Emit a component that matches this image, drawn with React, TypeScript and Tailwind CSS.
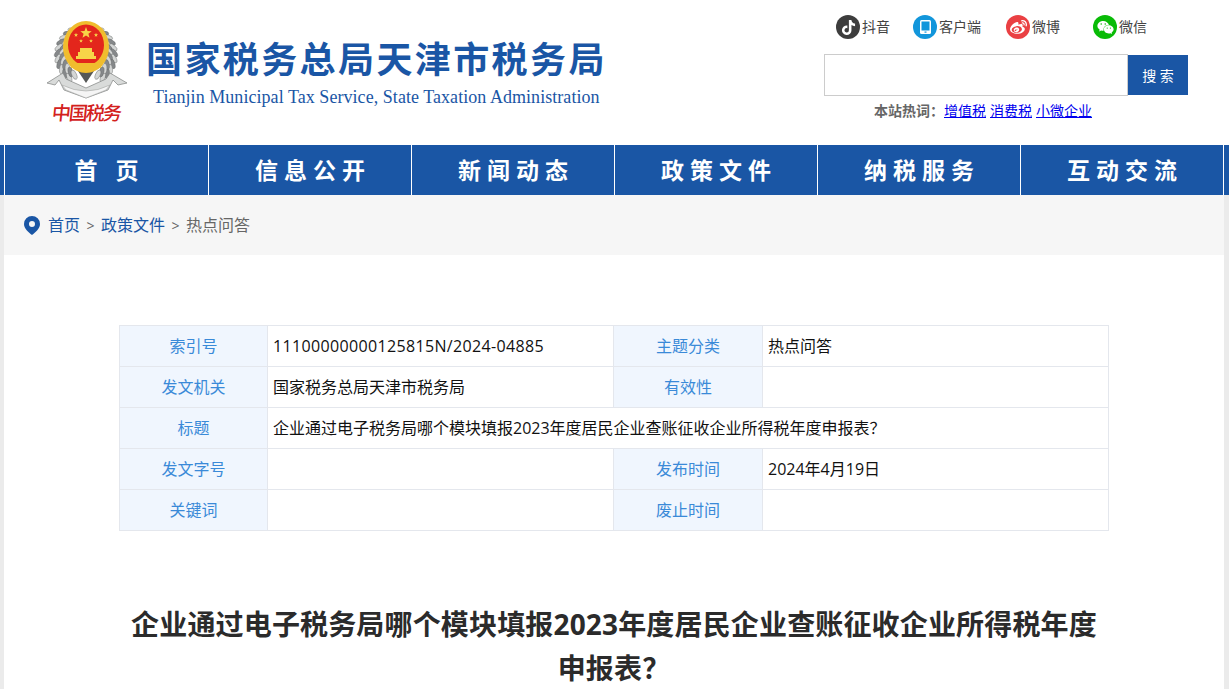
import React from "react";
import { FaTiktok, FaWeibo, FaWeixin } from "react-icons/fa";

const cjk = "font-['Open_Sans','Noto_Sans_CJK_SC',sans-serif]";

function Star({ x, y, r }: { x: number; y: number; r: number }) {
  const pts = Array.from({ length: 10 }, (_, i) => {
    const a = -Math.PI / 2 + (i * Math.PI) / 5;
    const d = i % 2 === 0 ? r : r * 0.42;
    return `${x + d * Math.cos(a)},${y + d * Math.sin(a)}`;
  }).join(" ");
  return <polygon points={pts} fill="#f7d448" />;
}

function Emblem() {
  const leaves = Array.from({ length: 11 }, (_, i) => i);
  const layer = (r: number, shift: number) =>
    leaves.map((i) => {
      const deg = -62 + i * 11.5 + shift;
      const a = (deg * Math.PI) / 180;
      const dx = r * Math.cos(a);
      const y = 55 + r * Math.sin(a);
      const fill = i % 2 ? "#85888a" : "#d4d6d5";
      return (
        <g key={`${r}-${i}`}>
          <ellipse cx={86 - dx} cy={y} rx="5" ry="2.3" fill={fill} stroke="#5f6261" strokeWidth="0.4" transform={`rotate(${-deg + 90 + 35} ${86 - dx} ${y})`} />
          <ellipse cx={86 + dx} cy={y} rx="5" ry="2.3" fill={fill} stroke="#5f6261" strokeWidth="0.4" transform={`rotate(${deg - 90 - 35} ${86 + dx} ${y})`} />
        </g>
      );
    });
  return (
    <svg width="85" height="84" viewBox="45 18 85 84" className="block blur-[0.3px]">
      {layer(28, 0)}
      {layer(23, 6)}
      <path d="M47 83 L63 73 L66 79 L86 88 L106 79 L110 73 L127 83 L118 85 L113 80 L108 90 L86 98 L64 90 L59 80 L55 85 Z" fill="#d9dbda" stroke="#7e8180" strokeWidth="0.7" />
      <path d="M62 85 Q86 97 110 85 L106 90 L86 98 L66 90 Z" fill="#f5f5f5" stroke="#9a9c9b" strokeWidth="0.5" />
      <path d="M78 71 L86 83 L94 71 Z" fill="#555857" />
      <ellipse cx="86" cy="47" rx="23" ry="26" fill="#f0bd2e" />
      <ellipse cx="86" cy="45" rx="18" ry="20.500" fill="#e3261c" />
      <Star x={86} y={33} r={6} />
      <Star x={76} y={35} r={2.2} />
      <Star x={96} y={35} r={2.2} />
      <Star x={81} y={41} r={2} />
      <Star x={91} y={41} r={2} />
      <path d="M76 56 H96 V59 H76 Z M78 52 H94 V56 H78 Z M80 48 H92 V52 H80 Z" fill="#f7d448" />
      <path d="M69 60 L76 63 H96 L103 60 L101 68 L94 66 L86 70 L78 66 L71 68 Z" fill="#f0bd2e" />
    </svg>
  );
}

function TopLink({ bg, icon, label, cls }: { bg: string; icon: React.ReactNode; label: string; cls: string }) {
  return (
    <div className={`flex items-center ${cls}`}>
      <span className={`flex h-6 w-6 items-center justify-center rounded-full text-white ${bg}`}>{icon}</span>
      <span className="ml-[2px] text-[14px] leading-6 text-[#444]">{label}</span>
    </div>
  );
}

const navItems = ["首 页", "信息公开", "新闻动态", "政策文件", "纳税服务", "互动交流"];

const Label = ({ children }: { children: React.ReactNode }) => (
  <td className="border border-[#e4e7ed] bg-[#f0f6fe] text-center text-[#3a8ad8]">{children}</td>
);
const Val = ({ children, span }: { children?: React.ReactNode; span?: number }) => (
  <td colSpan={span} className="border border-[#e4e7ed] px-[5px] text-[#111]">{children}</td>
);

export default function App() {
  return (
    <div className={`h-screen overflow-hidden bg-[#ebebeb] ${cjk}`}>
      <header className="flex h-[145px] bg-white">
        <div className="ml-[45px] mt-[18px] flex w-[85px] flex-col items-center">
          <Emblem />
          <div className="mt-[-3px] ml-[-2px] -skew-x-6 text-[19px] font-medium leading-[28px] tracking-[-2px] text-[#d3211c]">中国税务</div>
        </div>
        <div className="ml-[16px] mt-[35px] flex w-[461px] flex-col">
          <h1 className="whitespace-nowrap text-[36px] font-bold leading-[50px] tracking-[2.4px] text-[#1a56a5]">国家税务总局天津市税务局</h1>
          <p className="ml-[7px] whitespace-nowrap font-['Liberation_Serif',serif] text-[18px] leading-6 tracking-[0.05px] text-[#1a56a5]">Tianjin Municipal Tax Service, State Taxation Administration</p>
        </div>
        <div className="ml-[217px] flex w-[364px] flex-col">
          <div className="ml-[12px] mt-[15px] flex h-6">
            <TopLink bg="bg-[#3d3d3d]" icon={<FaTiktok size={15} />} label="抖音" cls="w-[77px]" />
            <TopLink
              bg="bg-[#1296db]"
              icon={
                <svg width="11" height="14" viewBox="0 0 11 14">
                  <rect x="0" y="0" width="11" height="14" rx="1.500" fill="#fff" />
                  <rect x="1.500" y="1.500" width="8" height="9" fill="#1296db" />
                  <rect x="4.500" y="11.500" width="2" height="1.200" fill="#1296db" />
                </svg>
              }
              label="客户端"
              cls="w-[93px]"
            />
            <TopLink bg="bg-[#ea4043]" icon={<FaWeibo size={17} />} label="微博" cls="w-[87px]" />
            <TopLink bg="bg-[#09bb07]" icon={<FaWeixin size={17} />} label="微信" cls="w-[80px]" />
          </div>
          <div className="mt-[15px] flex h-[42px] items-center">
            <input aria-label="搜索" className="h-[42px] w-[304px] border border-[#ccc] bg-white outline-none" />
            <button className="h-10 w-[60px] bg-[#1a56a5] text-[14px] text-white">搜 索</button>
          </div>
          <div className="ml-[50px] mt-[5px] whitespace-nowrap text-[14px] leading-[20px]">
            <span className="font-bold text-[#666]">本站热词：</span>
            <a href="#" className="text-[#0000ee] underline">增值税</a>
            <a href="#" className="ml-[4px] text-[#0000ee] underline">消费税</a>
            <a href="#" className="ml-[4px] text-[#0000ee] underline">小微企业</a>
          </div>
        </div>
      </header>

      <nav className="flex h-[50px] bg-[#1a56a5] pl-[4px]">
        <div className="flex border-l border-white">
          {navItems.map((n) => (
            <a key={n} href="#" className="flex h-[50px] w-[203px] items-center justify-center border-r border-white pl-[6px] text-[23px] font-bold tracking-[6px] text-white first:w-[204px]">{n}</a>
          ))}
        </div>
      </nav>

      <main className="mx-[4px] w-[1220px] bg-white">
        <div className="flex h-[60px] items-center bg-[#f6f6f6] pl-[20px] text-[16px] text-[#666]">
          <svg width="16" height="19" viewBox="0 0 16 19" className="mr-[8px] shrink-0">
            <path fillRule="evenodd" d="M8 0a8 8 0 0 1 8 8c0 4.500-4.500 8.500-8 11-3.500-2.500-8-6.500-8-11a8 8 0 0 1 8-8Zm0 5a3 3 0 1 0 0 6 3 3 0 0 0 0-6Z" fill="#1a56a5" />
          </svg>
          <a href="#" className="text-[#1a56a5]">首页</a>
          <span className="mx-[6.500px] text-[14px]">&gt;</span>
          <a href="#" className="text-[#1a56a5]">政策文件</a>
          <span className="mx-[6.500px] text-[14px]">&gt;</span>
          <span>热点问答</span>
        </div>

        <div className="px-[115px] pt-[70px]">
          <table className="w-[990px] table-fixed border-collapse text-[16px]">
            <colgroup>
              <col className="w-[148px]" />
              <col className="w-[346px]" />
              <col className="w-[149px]" />
              <col className="w-[346px]" />
            </colgroup>
            <tbody className="[&>tr]:h-[41px]">
              <tr><Label>索引号</Label><Val><span className="tracking-[0.35px]">11100000000125815N/2024-04885</span></Val><Label>主题分类</Label><Val>热点问答</Val></tr>
              <tr><Label>发文机关</Label><Val>国家税务总局天津市税务局</Val><Label>有效性</Label><Val /></tr>
              <tr><Label>标题</Label><Val span={3}>企业通过电子税务局哪个模块填报2023年度居民企业查账征收企业所得税年度申报表？</Val></tr>
              <tr><Label>发文字号</Label><Val /><Label>发布时间</Label><Val>2024年4月19日</Val></tr>
              <tr><Label>关键词</Label><Val /><Label>废止时间</Label><Val /></tr>
            </tbody>
          </table>
          <h2 className="mt-[71px] text-center text-[28px] font-bold leading-[44px] tracking-[0.16px] text-[#2b2b2b]">企业通过电子税务局哪个模块填报2023年度居民企业查账征收企业所得税年度<br />申报表？</h2>
        </div>
      </main>
    </div>
  );
}
